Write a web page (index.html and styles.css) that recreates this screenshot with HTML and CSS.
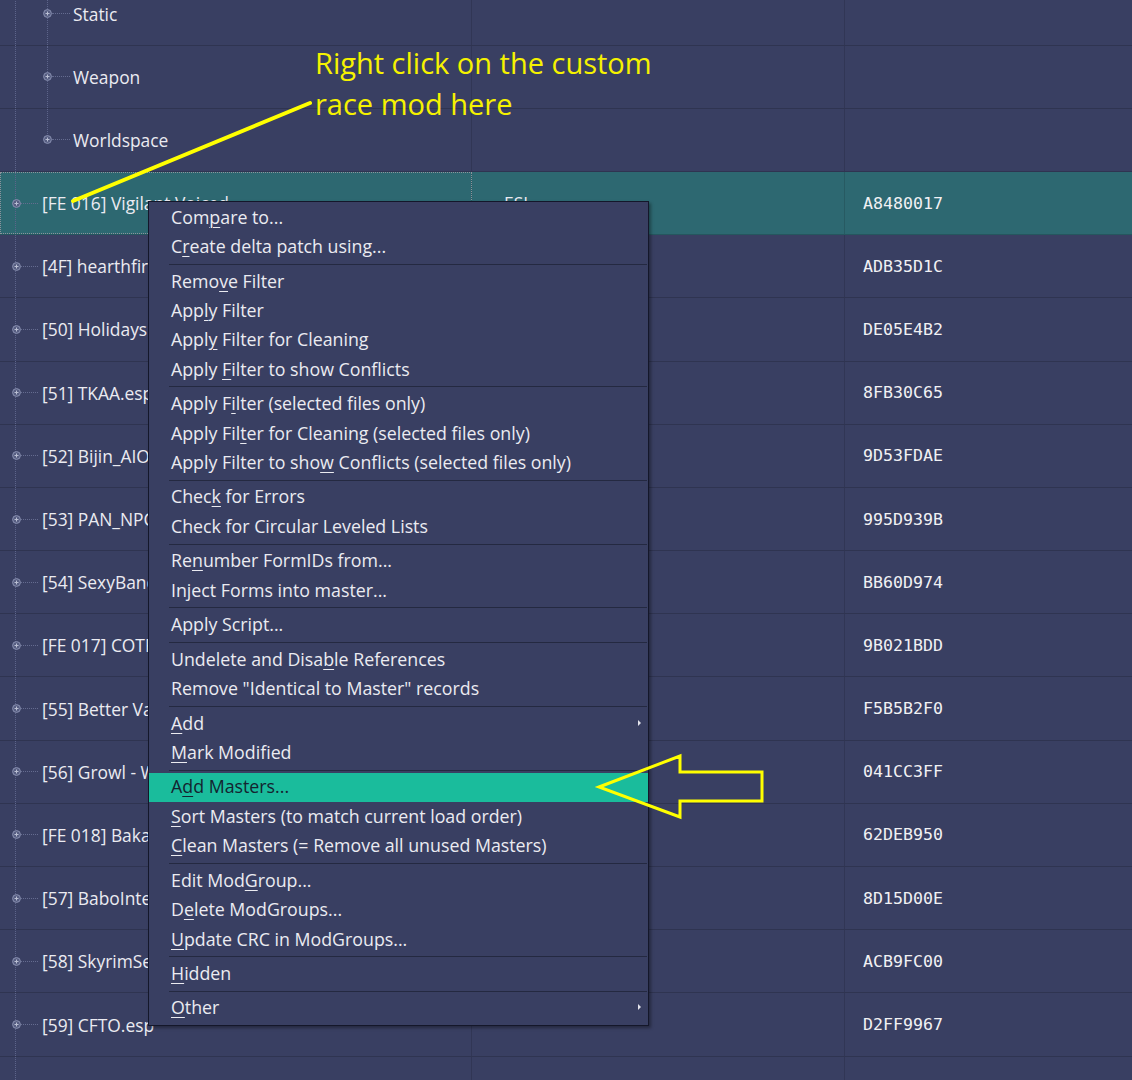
FILE: index.html
```html
<!DOCTYPE html>
<html lang="en">
<head>
    <meta charset="UTF-8">
    <title>xEdit - Add Masters</title>
    <link rel="stylesheet" href="styles.css">
</head>
<body>
    <svg width="0" height="0" class="defs">
        <symbol id="plus" viewBox="0 0 9 9">
            <circle cx="4.5" cy="4.5" r="3.9" fill="#575e82" stroke="#8a91b1" stroke-width="1"/>
            <path d="M2.5 4.5h4M4.5 2.5v4" stroke="#b9bed3" stroke-width="1"/>
        </symbol>
    </svg>

    <div class="tree">
        <div class="row child">
            <div class="cell name"><svg class="node"><use href="#plus"/></svg><span class="twig"></span><span>Static</span></div>
            <div class="cell ext"></div>
            <div class="cell hex"></div>
        </div>
        <div class="row child">
            <div class="cell name"><svg class="node"><use href="#plus"/></svg><span class="twig"></span><span>Weapon</span></div>
            <div class="cell ext"></div>
            <div class="cell hex"></div>
        </div>
        <div class="row child last">
            <div class="cell name"><svg class="node"><use href="#plus"/></svg><span class="twig"></span><span>Worldspace</span></div>
            <div class="cell ext"></div>
            <div class="cell hex"></div>
        </div>
        <div class="row sel">
            <div class="cell name"><svg class="node"><use href="#plus"/></svg><span class="twig"></span><span>[FE 016] Vigilant Voiced</span></div>
            <div class="cell ext">ESL</div>
            <div class="cell hex">A8480017</div>
        </div>
        <div class="row">
            <div class="cell name"><svg class="node"><use href="#plus"/></svg><span class="twig"></span><span>[4F] hearthfires.esm</span></div>
            <div class="cell ext"></div>
            <div class="cell hex">ADB35D1C</div>
        </div>
        <div class="row">
            <div class="cell name"><svg class="node"><use href="#plus"/></svg><span class="twig"></span><span>[50] Holidays.esp</span></div>
            <div class="cell ext"></div>
            <div class="cell hex">DE05E4B2</div>
        </div>
        <div class="row">
            <div class="cell name"><svg class="node"><use href="#plus"/></svg><span class="twig"></span><span>[51] TKAA.esp</span></div>
            <div class="cell ext"></div>
            <div class="cell hex">8FB30C65</div>
        </div>
        <div class="row">
            <div class="cell name"><svg class="node"><use href="#plus"/></svg><span class="twig"></span><span>[52] Bijin_AIO.esp</span></div>
            <div class="cell ext"></div>
            <div class="cell hex">9D53FDAE</div>
        </div>
        <div class="row">
            <div class="cell name"><svg class="node"><use href="#plus"/></svg><span class="twig"></span><span>[53] PAN_NPCs.esp</span></div>
            <div class="cell ext"></div>
            <div class="cell hex">995D939B</div>
        </div>
        <div class="row">
            <div class="cell name"><svg class="node"><use href="#plus"/></svg><span class="twig"></span><span>[54] SexyBandits.esp</span></div>
            <div class="cell ext"></div>
            <div class="cell hex">BB60D974</div>
        </div>
        <div class="row">
            <div class="cell name"><svg class="node"><use href="#plus"/></svg><span class="twig"></span><span>[FE 017] COTR.esp</span></div>
            <div class="cell ext"></div>
            <div class="cell hex">9B021BDD</div>
        </div>
        <div class="row">
            <div class="cell name"><svg class="node"><use href="#plus"/></svg><span class="twig"></span><span>[55] Better Vampires.esp</span></div>
            <div class="cell ext"></div>
            <div class="cell hex">F5B5B2F0</div>
        </div>
        <div class="row">
            <div class="cell name"><svg class="node"><use href="#plus"/></svg><span class="twig"></span><span>[56] Growl - Werebeasts.esp</span></div>
            <div class="cell ext"></div>
            <div class="cell hex">041CC3FF</div>
        </div>
        <div class="row">
            <div class="cell name"><svg class="node"><use href="#plus"/></svg><span class="twig"></span><span>[FE 018] Bakas.esp</span></div>
            <div class="cell ext"></div>
            <div class="cell hex">62DEB950</div>
        </div>
        <div class="row">
            <div class="cell name"><svg class="node"><use href="#plus"/></svg><span class="twig"></span><span>[57] BaboInteractiveDia.esp</span></div>
            <div class="cell ext"></div>
            <div class="cell hex">8D15D00E</div>
        </div>
        <div class="row">
            <div class="cell name"><svg class="node"><use href="#plus"/></svg><span class="twig"></span><span>[58] SkyrimSewers.esp</span></div>
            <div class="cell ext"></div>
            <div class="cell hex">ACB9FC00</div>
        </div>
        <div class="row">
            <div class="cell name"><svg class="node"><use href="#plus"/></svg><span class="twig"></span><span>[59] CFTO.esp</span></div>
            <div class="cell ext"></div>
            <div class="cell hex">D2FF9967</div>
        </div>
        <div class="row">
            <div class="cell name"></div>
            <div class="cell ext"></div>
            <div class="cell hex"></div>
        </div>
    </div>

    <!-- context menu -->
    <div class="menu">
        <div class="item"><span>Com<u>p</u>are to...</span></div>
        <div class="item"><span>C<u>r</u>eate delta patch using...</span></div>
        <div class="sep"></div>
        <div class="item"><span>Remo<u>v</u>e Filter</span></div>
        <div class="item"><span>App<u>l</u>y Filter</span></div>
        <div class="item"><span>Appl<u>y</u> Filter for Cleaning</span></div>
        <div class="item"><span>Apply <u>F</u>ilter to show Conflicts</span></div>
        <div class="sep"></div>
        <div class="item"><span>Apply F<u>i</u>lter (selected files only)</span></div>
        <div class="item"><span>Apply Fil<u>t</u>er for Cleaning (selected files only)</span></div>
        <div class="item"><span>Apply Filter to sho<u>w</u> Conflicts (selected files only)</span></div>
        <div class="sep"></div>
        <div class="item"><span>Chec<u>k</u> for Errors</span></div>
        <div class="item"><span>Check for Circular Leveled Lists</span></div>
        <div class="sep"></div>
        <div class="item"><span>Re<u>n</u>umber FormIDs from...</span></div>
        <div class="item"><span>Inject Forms into master...</span></div>
        <div class="sep"></div>
        <div class="item"><span>Apply Script...</span></div>
        <div class="sep"></div>
        <div class="item"><span>Undelete and Disa<u>b</u>le References</span></div>
        <div class="item"><span>Remove "Identical to Master" records</span></div>
        <div class="sep"></div>
        <div class="item sub"><span><u>A</u>dd</span></div>
        <div class="item"><span><u>M</u>ark Modified</span></div>
        <div class="sep"></div>
        <div class="item hot"><span>A<u>d</u>d Masters...</span></div>
        <div class="item"><span><u>S</u>ort Masters (to match current load order)</span></div>
        <div class="item"><span><u>C</u>lean Masters (= Remove all unused Masters)</span></div>
        <div class="sep"></div>
        <div class="item"><span>Edit Mod<u>G</u>roup...</span></div>
        <div class="item"><span>D<u>e</u>lete ModGroups...</span></div>
        <div class="item"><span><u>U</u>pdate CRC in ModGroups...</span></div>
        <div class="sep"></div>
        <div class="item"><span><u>H</u>idden</span></div>
        <div class="sep"></div>
        <div class="item sub"><span><u>O</u>ther</span></div>
    </div>

    <!-- tutorial annotations -->
    <div class="note">Right click on the custom<br>race mod here</div>
    <svg class="marks" width="1132" height="1080" viewBox="0 0 1132 1080">
        <line x1="73" y1="201" x2="310" y2="103" stroke="#ffff00" stroke-width="4" stroke-linecap="round"/>
        <polygon points="599,787 680,756 680,772 762,772 762,801 680,801 680,817" fill="none" stroke="#ffff00" stroke-width="3"/>
    </svg>
</body>
</html>
```

FILE: styles.css
```css
* {
    margin: 0;
    padding: 0;
    box-sizing: border-box;
}
body {
    width: 1132px;
    height: 1080px;
    overflow: hidden;
    position: relative;
    background: #393f62;
    font-family: 'Open Sans', 'Noto Sans', sans-serif;
    color: #ebebf1;
}
.defs {
    position: absolute;
}
/* Tree / list */
.tree {
    position: relative;
    margin-top: -17.6px;
}
.tree::before {
    content: '';
    position: absolute;
    left: 15px;
    top: 0;
    bottom: 0;
    border-left: 1px dotted #5d648a;
}
.row {
    display: grid;
    grid-template-columns: 472px 373px 1fr;
    height: 63.2px;
    border-bottom: 1px solid rgba(0, 0, 0, 0.17);
}
.row.sel {
    background: #2d6871;
}
.cell {
    display: flex;
    align-items: center;
    border-right: 1px solid rgba(0, 0, 0, 0.13);
    white-space: nowrap;
    overflow: hidden;
}
.cell:last-child {
    border-right: none;
}
.name {
    position: relative;
    padding-left: 12px;
    font-size: 17.4px;
}
.row.sel .name {
    outline: 1px dotted #8c939c;
    outline-offset: -1px;
}
.child .name {
    padding-left: 43px;
}
.child .name::before {
    content: '';
    position: absolute;
    left: 47px;
    top: 0;
    bottom: 0;
    border-left: 1px dotted #5d648a;
}
.child.last .name::before {
    bottom: 50%;
}
.node {
    width: 9px;
    height: 9px;
    flex: none;
    position: relative;
}
.twig {
    width: 17px;
    margin-right: 4px;
    border-top: 1px dotted #656c90;
}
.child .twig {
    width: 18px;
    margin-right: 3px;
}
.ext {
    padding-left: 32px;
    font-size: 17.4px;
}
.hex {
    padding-left: 18px;
    font-family: 'DejaVu Sans Mono', monospace;
    font-size: 16.6px;
    color: #f1f1f4;
}
/* Context menu */
.menu {
    position: absolute;
    left: 148px;
    top: 201px;
    width: 501px;
    padding: 1px 0 2px;
    background: #393f62;
    border: 1px solid #14172a;
    box-shadow: 2px 2px 3px rgba(0, 0, 0, 0.35);
    font-size: 17.8px;
}
.item {
    height: 29.4px;
    display: flex;
    align-items: center;
    padding-left: 22px;
    padding-bottom: 2px;
    white-space: nowrap;
}
.item u {
    text-decoration-thickness: 1px;
    text-underline-offset: 3px;
}
.item.hot {
    background: #1abc9c;
    color: #142430;
}
.item.sub::after {
    content: '';
    margin-left: auto;
    margin-right: 7px;
    border-left: 3px solid #e4e4ec;
    border-top: 3px solid transparent;
    border-bottom: 3px solid transparent;
}
.sep {
    height: 1px;
    margin: 2px 1px 2.1px 20px;
    background: #242941;
}
/* Annotation */
.note {
    position: absolute;
    left: 315px;
    top: 42px;
    font-size: 29px;
    line-height: 41px;
    color: #f6f200;
}
.marks {
    position: absolute;
    left: 0;
    top: 0;
    pointer-events: none;
}
```
